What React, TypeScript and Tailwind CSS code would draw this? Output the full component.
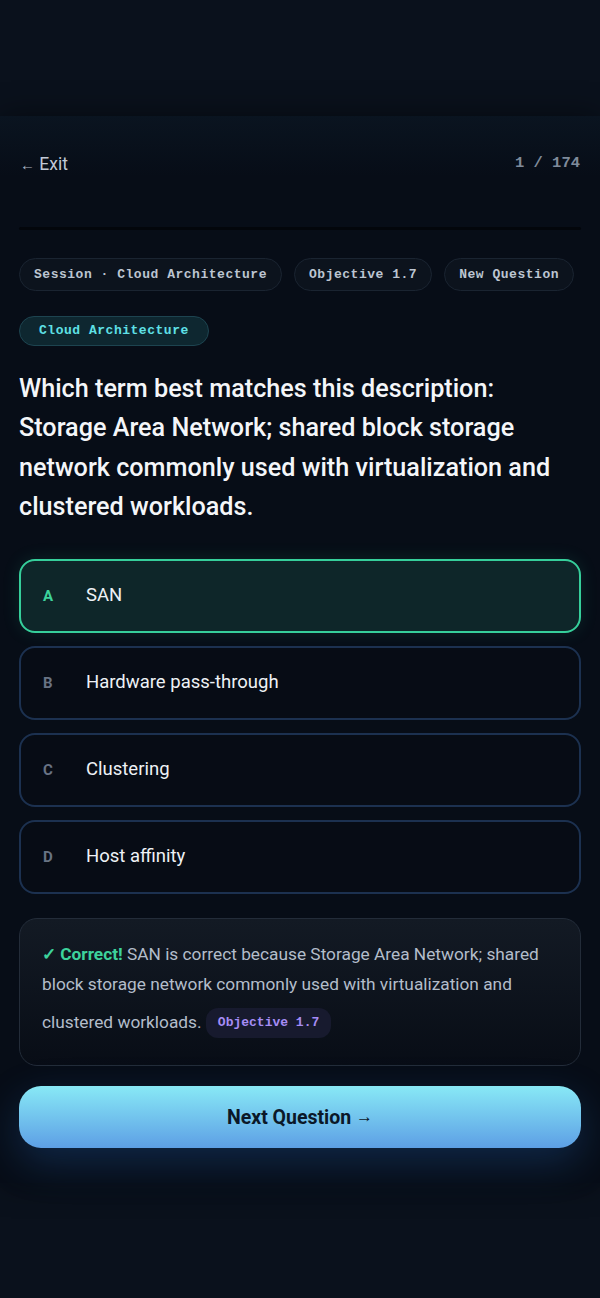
import React from "react";

const mono = { fontFamily: '"Liberation Mono", "DejaVu Sans Mono", monospace' };

function Chip({ children }: { children: React.ReactNode }) {
  return (
    <span
      className="h-[33px] px-[14px] flex items-center rounded-full border border-[#1a2431] bg-[#0c131d] text-[13px] font-bold tracking-[0.04em] text-[#bcc5d1]"
      style={mono}
    >
      {children}
    </span>
  );
}

function Option({ letter, text, selected }: { letter: string; text: string; selected?: boolean }) {
  return (
    <div
      className={
        selected
          ? "h-[74px] rounded-[16px] border-2 border-[#36cf9b] bg-[#0e2629] flex items-center px-[22px] shadow-[0_0_18px_rgba(52,211,153,0.12)]"
          : "h-[74px] rounded-[16px] border-2 border-[#1c3150] bg-[#070c15] flex items-center px-[22px]"
      }
    >
      <span
        className={
          selected
            ? "w-[43px] text-[15px] font-bold text-[#3dd29c]"
            : "w-[43px] text-[15px] font-bold text-[#687384]"
        }
      >
        {letter}
      </span>
      <span className="text-[18.5px] text-[#eef2f6]">{text}</span>
    </div>
  );
}

export default function App() {
  return (
    <div
      className="min-h-[1298px] bg-[#0a111c] pt-[116px]"
      style={{ fontFamily: 'Roboto, "Noto Sans", sans-serif' }}
    >
      <div className="relative bg-[linear-gradient(180deg,#0a1420_0px,#070d17_60px,#070d17_100%)] shadow-[0_0_30px_rgba(0,0,0,0.45)] px-[19px] pt-[36px] pb-[35px]">
        <div className="flex items-center justify-between h-[24px] px-[1px]">
          <span className="text-[17.5px] text-[#c2cad6]">
            <span className="text-[15px] text-[#aab4c2]">←</span> Exit
          </span>
          <span className="text-[15.5px] font-bold text-[#7f8b9b]" style={mono}>
            1 / 174
          </span>
        </div>

        <div className="mt-[51px] h-[3px] rounded-full bg-[#03060b]" />

        <div className="mt-[28px] flex gap-[12px]">
          <Chip>Session · Cloud Architecture</Chip>
          <Chip>Objective 1.7</Chip>
          <Chip>New Question</Chip>
        </div>

        <div className="mt-[25px] flex">
          <span
            className="h-[30px] px-[19px] flex items-center rounded-full border border-[#1d4450] bg-[#0e2730] text-[13px] font-bold tracking-[0.04em] text-[#5fe0e6]"
            style={mono}
          >
            Cloud Architecture
          </span>
        </div>

        <h1 className="mt-[23px] max-w-[550px] text-[25.2px] font-medium leading-[39.3px] text-[#f4f6f9]">
          Which term best matches this description: Storage Area Network; shared block storage network
          commonly used with virtualization and clustered workloads.
        </h1>

        <div className="mt-[33px] flex flex-col gap-[13px]">
          <Option letter="A" text="SAN" selected />
          <Option letter="B" text="Hardware pass-through" />
          <Option letter="C" text="Clustering" />
          <Option letter="D" text="Host affinity" />
        </div>

        <div className="mt-[24px] rounded-[18px] border border-[#232c39] bg-[linear-gradient(180deg,#131a24,#080d16)] pl-[22px] pr-[18px] pt-[20px] pb-[18px]">
          <p className="text-[17.3px] leading-[30px] text-[#b3bdca]">
            <span className="font-bold text-[#3dd29c]">✓ Correct!</span> SAN is correct because Storage
            Area Network; shared block storage network commonly used with virtualization and clustered
            workloads.{" "}
            <span
              className="inline-block align-middle my-[9px] rounded-[12px] bg-[#171a2e] px-[12px] py-[5px] text-[13px] font-bold leading-[20px] text-[#a58cf5]"
              style={mono}
            >
              Objective 1.7
            </span>
          </p>
        </div>

        <button className="mt-[20px] w-full h-[62px] rounded-[22px] bg-[linear-gradient(180deg,#88e9f6,#5d9fe5)] shadow-[0_14px_40px_rgba(40,110,200,0.28)] text-[19.5px] font-bold text-[#0b1829]">
          Next Question <span className="inline-block -translate-y-[2px] text-[17px]">→</span>
        </button>
      </div>
    </div>
  );
}
